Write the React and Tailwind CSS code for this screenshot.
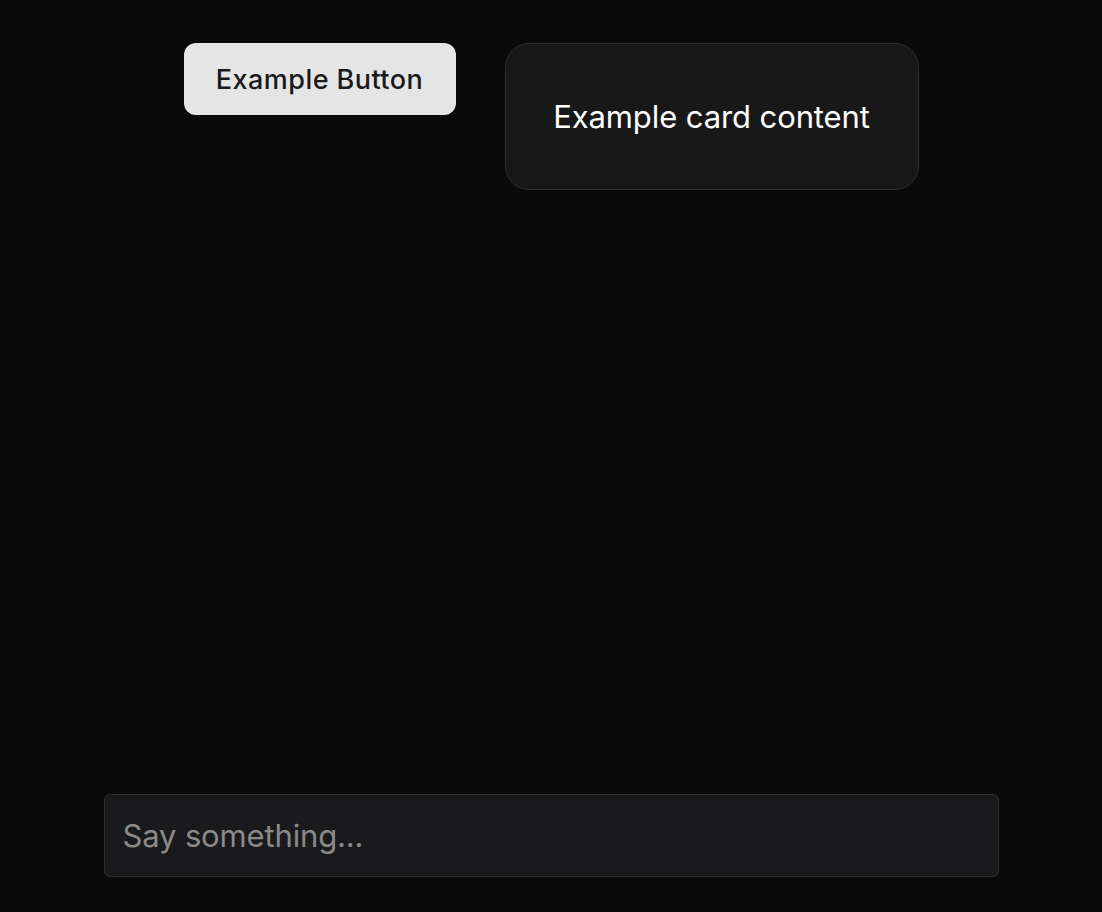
export default function App() {
  return (
    <div className="h-[912px] w-full bg-[#0a0a0a] flex flex-col items-center" style={{ fontFamily: 'Inter, "Noto Sans", sans-serif' }}>
      <div className="flex flex-row items-start gap-[49px] pt-[43px]">
        <button className="w-[272px] h-[72px] rounded-[12px] bg-[#e5e5e5] text-[#1a1a1a] text-[27px] font-medium tracking-[0.45px] pt-[3px]">
          Example Button
        </button>
        <div className="w-[414px] h-[147px] rounded-[24px] bg-[#181818] border border-[#2d2d2d] flex items-center justify-center text-white text-[31px] tracking-[-0.1px] pt-[2px]">
          Example card content
        </div>
      </div>
      <div className="flex-1" />
      <div className="mb-[35px]">
        <input
          placeholder="Say something..."
          className="w-[895px] h-[83px] rounded-[6px] bg-[#1a1a1c] border border-[#2f2f2f] px-[18px] text-[31px] tracking-[-0.15px] text-white placeholder:text-[#8a8a8a] outline-none"
        />
      </div>
    </div>
  );
}
